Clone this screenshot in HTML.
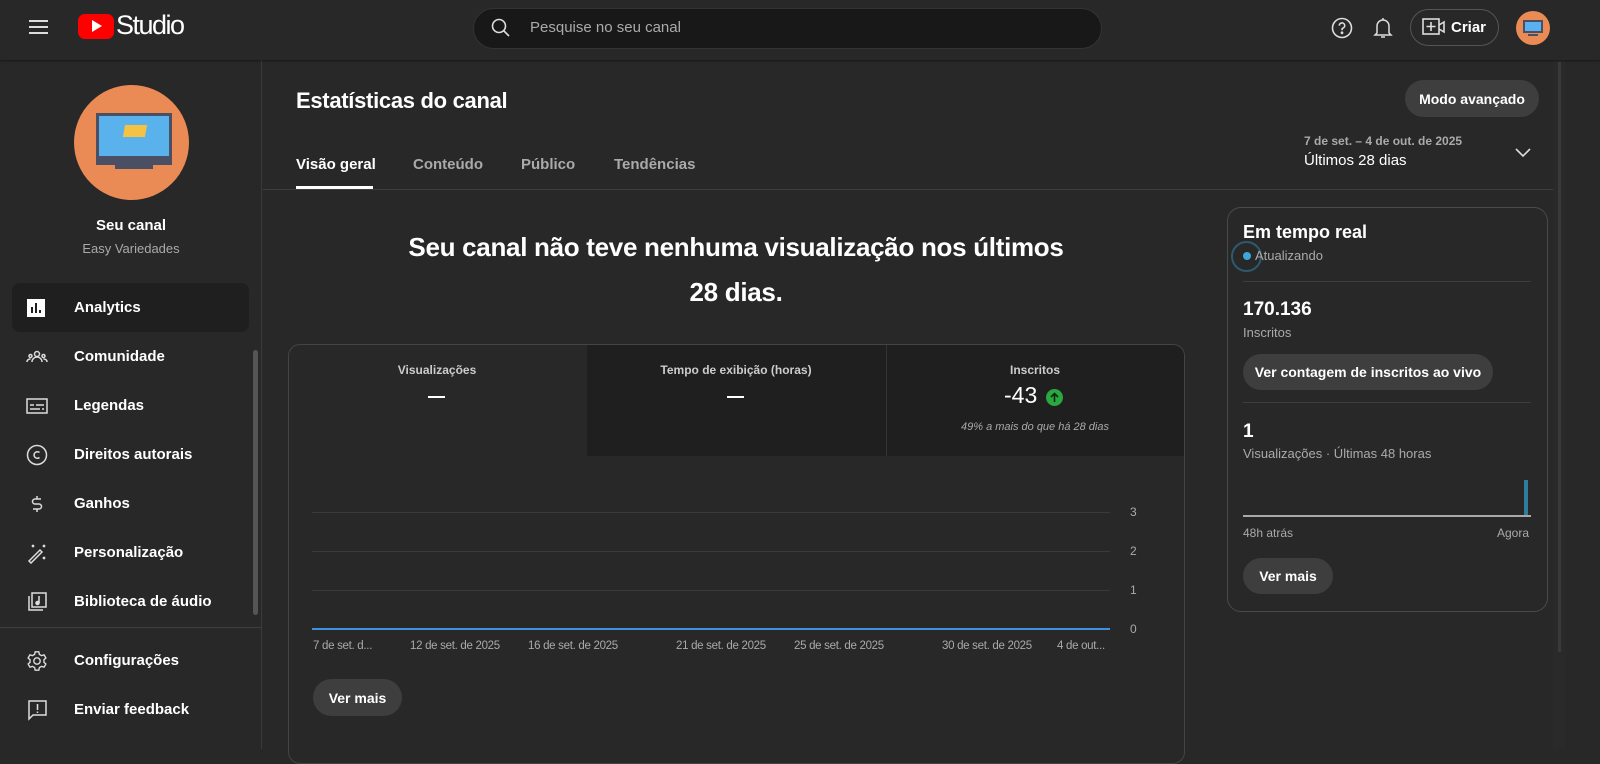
<!DOCTYPE html>
<html><head><meta charset="utf-8"><style>
*{box-sizing:border-box;margin:0;padding:0}
body{width:1600px;height:749px;overflow:hidden;background:#282828;color:#fff;font-family:"Liberation Sans",Roboto,sans-serif;position:relative}
.abs{position:absolute}
.hdr{left:0;top:0;width:1600px;height:60px;background:#282828;box-shadow:0 1px 2px rgba(0,0,0,.4);z-index:2}
.side{left:0;top:60px;width:262px;height:689px;border-right:1px solid #3a3a3a}
.nav{position:absolute;left:12px;width:237px;height:49px;display:flex;align-items:center;font-size:15px;font-weight:bold;border-radius:8px}
.nav svg{position:absolute;left:14px}
.nav span{position:absolute;left:62px}
.btn{position:absolute;background:#3e3e3e;border-radius:20px;font-size:14px;font-weight:bold;display:flex;align-items:center;justify-content:center}
.tab{position:absolute;top:156px;font-size:15px;font-weight:bold;color:#aaa}
.grid{position:absolute;left:312px;width:798px;height:1px;background:#3a3a3a}
.yl{position:absolute;left:1130px;font-size:12px;color:#aaa}
.xl{position:absolute;top:640px;font-size:11.5px;letter-spacing:-.3px;color:#aaa;white-space:nowrap}
.mh{position:absolute;top:363px;font-size:12px;color:#ccc;font-weight:bold;text-align:center;width:298px}
</style></head><body>
<div class="abs hdr">
  <div class="abs" style="left:29px;top:20px;width:19px;height:2px;background:#ddd;box-shadow:0 6px 0 #ddd,0 12px 0 #ddd"></div>
  <div class="abs" style="left:78px;top:14px;width:36px;height:25px;background:#f00;border-radius:7px"></div>
  <div class="abs" style="left:92px;top:20px;width:0;height:0;border-left:10px solid #fff;border-top:6px solid transparent;border-bottom:6px solid transparent"></div>
  <div class="abs" style="left:116px;top:10px;font-size:27px;letter-spacing:-1.5px;font-family:'Liberation Sans Narrow','Liberation Sans',sans-serif">Studio</div>
  <div class="abs" style="left:473px;top:8px;width:629px;height:41px;background:#181818;border:1px solid #333;border-radius:21px"></div>
  <svg class="abs" style="left:490px;top:17px" width="22" height="22" viewBox="0 0 22 22" fill="none" stroke="#ddd" stroke-width="1.6"><circle cx="9" cy="9" r="6.5"/><path d="M13.5 13.5L19 19"/></svg>
  <div class="abs" style="left:530px;top:19px;font-size:15px;color:#aaa">Pesquise no seu canal</div>
  <svg class="abs" style="left:1331px;top:17px" width="22" height="22" viewBox="0 0 22 22" fill="none" stroke="#ddd" stroke-width="1.6"><circle cx="11" cy="11" r="9.5"/><path d="M8.3 8.6a2.7 2.7 0 1 1 3.7 2.5c-.7.3-1 .8-1 1.5v.6"/><circle cx="11" cy="15.8" r=".6" fill="#ddd"/></svg>
  <svg class="abs" style="left:1373px;top:16px" width="20" height="24" viewBox="0 0 20 24" fill="none" stroke="#ddd" stroke-width="1.5"><path d="M10 2v1.5M4 17V10a6 6 0 0 1 12 0v7l2 2H2z"/><path d="M8 21h4"/></svg>
  <div class="abs" style="left:1410px;top:9px;width:89px;height:37px;border:1px solid #555;border-radius:19px"></div>
  <svg class="abs" style="left:1422px;top:17px" width="24" height="20" viewBox="0 0 24 20" fill="none" stroke="#ddd" stroke-width="1.6"><rect x="1" y="2" width="16" height="15"/><path d="M9 5v9M4.5 9.5h9M17 8l5-3v10l-5-3"/></svg>
  <div class="abs" style="left:1451px;top:19px;font-size:15px;font-weight:bold">Criar</div>
  <div class="abs" style="left:1516px;top:11px;width:34px;height:34px;border-radius:50%;background:#ea8a55;overflow:hidden"><div class="abs" style="left:7px;top:9px;width:20px;height:13px;background:#5ab0f0;border:2px solid #4b4f63"></div><div class="abs" style="left:12px;top:23px;width:10px;height:2px;background:#4b4f63"></div></div>
</div>
<div class="abs side">
  <div class="abs" style="left:74px;top:25px;width:115px;height:115px;border-radius:50%;background:#ea8a55"></div>
  <div class="abs" style="left:96px;top:53px;width:76px;height:52px;background:#5ab2ec;border:3px solid #4b4f63;border-bottom-width:9px"></div>
  <div class="abs" style="left:120px;top:100px;width:20px;height:7px;background:#4b4f63"></div>
  <div class="abs" style="left:115px;top:105px;width:38px;height:4px;background:#4b4f63"></div>
  <div class="abs" style="left:124px;top:65px;width:22px;height:12px;background:#f5c243;transform:skewX(-10deg)"></div>
  <div class="abs" style="left:0;top:157px;width:262px;text-align:center;font-size:15px;font-weight:bold">Seu canal</div>
  <div class="abs" style="left:0;top:181px;width:262px;text-align:center;font-size:13px;color:#aaa">Easy Variedades</div>
  <div class="abs" style="left:253px;top:290px;width:5px;height:265px;background:#555;border-radius:3px"></div>
  <div class="abs" style="left:0;top:567px;width:262px;height:1px;background:#3e3e3e"></div>
  <div class="nav" style="top:223px;background:#1f1f1f"><svg width="20" height="20" viewBox="0 0 20 20"><rect x="1" y="1" width="18" height="18" fill="#fff"/><path d="M6 15V9M10 15V5M14 15v-3" stroke="#1f1f1f" stroke-width="2"/></svg><span>Analytics</span></div>
  <div class="nav" style="top:272px"><svg width="22" height="20" viewBox="0 0 22 20" fill="none" stroke="#ddd" stroke-width="1.5"><circle cx="11" cy="7" r="2.5"/><path d="M6 15c0-3 2.5-5 5-5s5 2 5 5"/><circle cx="4.5" cy="9" r="1.5"/><circle cx="17.5" cy="9" r="1.5"/><path d="M1 15c0-2 1.5-3 3.5-3M21 15c0-2-1.5-3-3.5-3"/></svg><span>Comunidade</span></div>
  <div class="nav" style="top:321px"><svg width="22" height="20" viewBox="0 0 22 20" fill="none" stroke="#ddd" stroke-width="1.5"><rect x="1" y="3" width="20" height="14"/><path d="M4 9h4M10 9h8M4 13h10M16 13h2"/></svg><span>Legendas</span></div>
  <div class="nav" style="top:370px"><svg width="22" height="22" viewBox="0 0 22 22" fill="none" stroke="#ddd" stroke-width="1.5"><circle cx="11" cy="11" r="9.5"/><path d="M13.5 8.5a3.3 3.3 0 1 0 0 5"/></svg><span>Direitos autorais</span></div>
  <div class="nav" style="top:419px"><svg width="22" height="22" viewBox="0 0 22 22" fill="none" stroke="#ddd" stroke-width="1.5"><path d="M15 6H9a2.5 2.5 0 0 0 0 5h4a2.5 2.5 0 0 1 0 5H7M11 3v3M11 16v3"/></svg><span>Ganhos</span></div>
  <div class="nav" style="top:468px"><svg width="22" height="22" viewBox="0 0 22 22" fill="none" stroke="#ddd" stroke-width="1.5"><path d="M3 19L14 8l2 2L5 21z"/><path d="M6 3l2 2M8 3L6 5M17 3l2 2M19 3l-2 2M17 15l2 2M19 15l-2 2"/></svg><span>Personalização</span></div>
  <div class="nav" style="top:517px"><svg width="22" height="22" viewBox="0 0 22 22" fill="none" stroke="#ddd" stroke-width="1.5"><rect x="6" y="2" width="14" height="14"/><path d="M3 5v14h14"/><path d="M13 5v7" /><circle cx="11.5" cy="12" r="1.5" fill="#ddd"/></svg><span>Biblioteca de áudio</span></div>
  <div class="nav" style="top:576px"><svg width="22" height="22" viewBox="0 0 24 24" fill="none" stroke="#ddd" stroke-width="1.5"><circle cx="12" cy="12" r="3.5"/><path d="M10 2h4l.6 2.8 2.4 1.4 2.7-.9 2 3.4-2.1 1.9v2.8l2.1 1.9-2 3.4-2.7-.9-2.4 1.4L14 22h-4l-.6-2.8-2.4-1.4-2.7.9-2-3.4 2.1-1.9v-2.8L2.3 8.7l2-3.4 2.7.9 2.4-1.4z"/></svg><span>Configurações</span></div>
  <div class="nav" style="top:625px"><svg width="22" height="22" viewBox="0 0 22 22" fill="none" stroke="#ddd" stroke-width="1.5"><path d="M3 2h17v14H7l-4 4z"/><path d="M11.5 5v6M11.5 12.5v1.5"/></svg><span>Enviar feedback</span></div>
</div>
<div class="abs" style="left:296px;top:88px;font-size:22px;font-weight:bold;letter-spacing:-.3px">Estatísticas do canal</div>
<div class="btn" style="left:1405px;top:80px;width:134px;height:37px">Modo avançado</div>
<div class="abs" style="left:1304px;top:134px;font-size:12px;color:#aaa;font-weight:bold">7 de set. – 4 de out. de 2025</div>
<div class="abs" style="left:1304px;top:152px;font-size:15px">Últimos 28 dias</div>
<svg class="abs" style="left:1514px;top:145px" width="18" height="14" viewBox="0 0 18 14" fill="none" stroke="#ddd" stroke-width="1.6"><path d="M2 4l7 7 7-7"/></svg>
<div class="tab" style="left:296px;color:#fff">Visão geral</div>
<div class="tab" style="left:413px">Conteúdo</div>
<div class="tab" style="left:521px">Público</div>
<div class="tab" style="left:614px">Tendências</div>
<div class="abs" style="left:296px;top:186px;width:77px;height:3px;background:#fff"></div>
<div class="abs" style="left:263px;top:189px;width:1290px;height:1px;background:#3e3e3e"></div>
<div class="abs" style="left:1553px;top:60px;width:12px;height:689px;background:#2a2a2a"></div>
<div class="abs" style="left:1558px;top:62px;width:3px;height:590px;background:#3a3a3a"></div>
<div class="abs" style="left:288px;top:225px;width:896px;text-align:center;font-size:26px;font-weight:bold;line-height:45px;letter-spacing:-.3px">Seu canal não teve nenhuma visualização nos últimos<br>28 dias.</div>
<div class="abs" style="left:288px;top:344px;width:897px;height:420px;border:1px solid #444;border-radius:12px;overflow:hidden">
  <div class="abs" style="left:298px;top:0;width:598px;height:111px;background:#1f1f1f"></div>
  <div class="abs" style="left:597px;top:0;width:1px;height:111px;background:#333"></div>
</div>
<div class="mh" style="left:288px">Visualizações</div>
<div class="mh" style="left:587px">Tempo de exibição (horas)</div>
<div class="mh" style="left:886px">Inscritos</div>
<div class="abs" style="left:428px;top:396px;width:17px;height:2px;background:#fff"></div>
<div class="abs" style="left:727px;top:396px;width:17px;height:2px;background:#fff"></div>
<div class="abs" style="left:1004px;top:382px;font-size:23px">-43</div>
<div class="abs" style="left:1046px;top:389px;width:17px;height:17px;border-radius:50%;background:#2ba640"></div>
<svg class="abs" style="left:1046px;top:389px" width="17" height="17" viewBox="0 0 17 17" fill="none" stroke="#0a2a0f" stroke-width="1.6"><path d="M8.5 13V4.5M5 8l3.5-3.5L12 8"/></svg>
<div class="abs" style="left:886px;top:421px;width:298px;text-align:center;font-size:11px;color:#aaa;font-style:italic">49% a mais do que há 28 dias</div>
<div class="grid" style="top:512px"></div><div class="grid" style="top:551px"></div><div class="grid" style="top:590px"></div>
<div class="abs" style="left:312px;top:628px;width:798px;height:2px;background:#3ea6ff;opacity:.85"></div>
<div class="yl" style="top:505px">3</div><div class="yl" style="top:544px">2</div><div class="yl" style="top:583px">1</div><div class="yl" style="top:622px">0</div>
<div class="xl" style="left:313px">7 de set. d...</div>
<div class="xl" style="left:410px">12 de set. de 2025</div>
<div class="xl" style="left:528px">16 de set. de 2025</div>
<div class="xl" style="left:676px">21 de set. de 2025</div>
<div class="xl" style="left:794px">25 de set. de 2025</div>
<div class="xl" style="left:942px">30 de set. de 2025</div>
<div class="xl" style="left:1057px">4 de out...</div>
<div class="btn" style="left:313px;top:679px;width:89px;height:37px">Ver mais</div>
<div class="abs" style="left:1227px;top:207px;width:321px;height:405px;border:1px solid #4a4a4a;border-radius:14px"></div>
<div class="abs" style="left:1243px;top:222px;font-size:18px;font-weight:bold">Em tempo real</div>
<div class="abs" style="left:1231px;top:241px;width:31px;height:31px;border:2px solid #2d5a6d;border-radius:50%"></div>
<div class="abs" style="left:1243px;top:252px;width:8px;height:8px;border-radius:50%;background:#3ea6d8"></div>
<div class="abs" style="left:1255px;top:248px;font-size:13px;color:#aaa">Atualizando</div>
<div class="abs" style="left:1243px;top:281px;width:288px;height:1px;background:#3e3e3e"></div>
<div class="abs" style="left:1243px;top:299px;font-size:19px;font-weight:bold">170.136</div>
<div class="abs" style="left:1243px;top:325px;font-size:13px;color:#aaa">Inscritos</div>
<div class="btn" style="left:1243px;top:354px;width:250px;height:36px">Ver contagem de inscritos ao vivo</div>
<div class="abs" style="left:1243px;top:402px;width:288px;height:1px;background:#3e3e3e"></div>
<div class="abs" style="left:1243px;top:421px;font-size:19px;font-weight:bold">1</div>
<div class="abs" style="left:1243px;top:446px;font-size:13px;color:#aaa">Visualizações · Últimas 48 horas</div>
<div class="abs" style="left:1524px;top:480px;width:4px;height:36px;background:#2e7d9c"></div>
<div class="abs" style="left:1243px;top:515px;width:288px;height:2px;background:#aaa"></div>
<div class="abs" style="left:1243px;top:526px;font-size:12px;color:#aaa">48h atrás</div>
<div class="abs" style="left:1497px;top:526px;font-size:12px;color:#aaa">Agora</div>
<div class="btn" style="left:1243px;top:558px;width:90px;height:36px">Ver mais</div>
</body></html>
